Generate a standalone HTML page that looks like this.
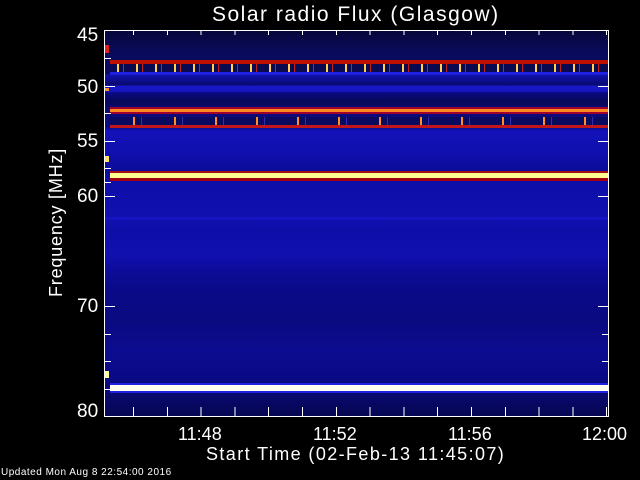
<!DOCTYPE html>
<html><head><style>
body{margin:0;width:640px;height:480px;background:#000;position:relative;overflow:hidden;font-family:"Liberation Sans",sans-serif;color:#fff}
.t{position:absolute;white-space:nowrap;font-weight:normal}
#plot{position:absolute;left:104px;top:30px;width:505px;height:387px;border:1px solid #fff;box-sizing:border-box;overflow:hidden;
background:linear-gradient(to bottom,#06063a 0px,#0a0a5a 20px,#0a0a60 28px,#0a0a60 43px,#1010a8 44px,#0a0a70 54px,#1818c8 55px,#1616c0 60px,#0a0a80 62px,#08085a 70px,#0c0c70 78px,#0a0a88 96px,#1212b8 100px,#1010b0 120px,#0c0c98 140px,#0e0ea8 150px,#1010b0 186px,#1a1ad0 187px,#1010b0 189px,#0e0ea8 200px,#1010b0 225px,#0c0c98 240px,#0a0a88 260px,#0a0a80 290px,#0c0c90 320px,#0a0a88 345px,#08086c 365px,#060650 387px)}
.b{position:absolute;left:5px;right:0}
.k{position:absolute;background:#fff}
</style></head><body>
<div class="t" style="left:212px;top:3px;font-size:21px;letter-spacing:1.5px">Solar radio Flux (Glasgow)</div>
<div id="plot">
<div class="b" style="top:29px;height:4px;background:#c01000"></div>
<div class="b" style="top:33px;height:9px;background:repeating-linear-gradient(to right,#0a0a50 0,#0a0a50 7px,#ffd050 7px,#ffd050 9px,#0a0a50 9px,#0a0a50 13px,#c02020 13px,#c02020 14px,#0a0a50 14px,#0a0a50 19px)"></div>
<div class="b" style="top:41px;height:3px;background:#2020e0"></div>
<div class="b" style="top:76px;height:2px;background:#a00030"></div>
<div class="b" style="top:78px;height:3px;background:#ff8a20"></div>
<div class="b" style="top:81px;height:2px;background:#a00030"></div>
<div class="b" style="top:86px;height:8px;background:repeating-linear-gradient(to right,#0a0a60 0,#0a0a60 23px,#ff9020 23px,#ff9020 25px,#0a0a60 25px,#0a0a60 31px,#3030b0 31px,#3030b0 32px,#0a0a60 32px,#0a0a60 41px)"></div>
<div class="b" style="top:94px;height:3px;background:#c01818"></div>
<div class="b" style="top:140px;height:2px;background:#a01010"></div>
<div class="b" style="top:142px;height:5px;background:#ffff90"></div>
<div class="b" style="top:147px;height:3px;background:#a00010"></div>
<div class="b" style="top:352px;height:2px;background:#2020e0"></div>
<div class="b" style="top:354px;height:6px;background:#fffff0"></div>
<div class="b" style="top:360px;height:2px;background:#2020e0"></div>
<div style="position:absolute;left:0;top:14px;width:4px;height:8px;background:#e02020"></div>
<div style="position:absolute;left:0;top:125px;width:4px;height:6px;background:#ffe060"></div>
<div style="position:absolute;left:0;top:340px;width:4px;height:7px;background:#ffffa0"></div>
<div style="position:absolute;left:0;top:57px;width:4px;height:3px;background:#ff9020"></div>
</div>
<div class="k" style="left:105px;top:58px;width:6px;height:1px"></div>
<div class="k" style="left:105px;top:86px;width:10px;height:1px"></div>
<div class="k" style="left:105px;top:113px;width:6px;height:1px"></div>
<div class="k" style="left:105px;top:141px;width:10px;height:1px"></div>
<div class="k" style="left:105px;top:168px;width:6px;height:1px"></div>
<div class="k" style="left:105px;top:182px;width:6px;height:1px"></div>
<div class="k" style="left:105px;top:196px;width:10px;height:1px"></div>
<div class="k" style="left:105px;top:306px;width:10px;height:1px"></div>
<div class="k" style="left:105px;top:334px;width:6px;height:1px"></div>
<div class="k" style="left:105px;top:361px;width:6px;height:1px"></div>
<div class="k" style="left:105px;top:389px;width:6px;height:1px"></div>
<div class="k" style="left:602px;top:334px;width:6px;height:1px"></div>
<div class="k" style="left:602px;top:361px;width:6px;height:1px"></div>
<div class="k" style="left:598px;top:306px;width:10px;height:1px"></div>
<div class="k" style="left:598px;top:196px;width:10px;height:1px"></div>
<div class="k" style="left:598px;top:141px;width:10px;height:1px"></div>
<div class="k" style="left:598px;top:86px;width:10px;height:1px"></div>
<div style="position:absolute;left:133px;top:407px;width:475px;height:9px;background:repeating-linear-gradient(to right,#fff 0,#fff 1px,transparent 1px,transparent 33.8px)"></div>
<div style="position:absolute;left:133px;top:31px;width:475px;height:4px;background:repeating-linear-gradient(to right,#fff 0,#fff 1px,transparent 1px,transparent 33.8px)"></div>
<div class="t" style="left:77px;top:25px;font-size:19px">45</div>
<div class="t" style="left:77px;top:77px;font-size:19px">50</div>
<div class="t" style="left:77px;top:131px;font-size:19px">55</div>
<div class="t" style="left:77px;top:186px;font-size:19px">60</div>
<div class="t" style="left:77px;top:296px;font-size:19px">70</div>
<div class="t" style="left:77px;top:401px;font-size:19px">80</div>
<div class="t" style="left:46px;top:297px;font-size:18px;letter-spacing:0.8px;transform:rotate(-90deg);transform-origin:0 0">Frequency [MHz]</div>
<div class="t" style="left:178px;top:424px;font-size:18px">11:48</div>
<div class="t" style="left:313px;top:424px;font-size:18px">11:52</div>
<div class="t" style="left:448px;top:424px;font-size:18px">11:56</div>
<div class="t" style="left:582px;top:424px;font-size:18px">12:00</div>
<div class="t" style="left:206px;top:444px;font-size:18px;letter-spacing:1.4px">Start Time (02-Feb-13 11:45:07)</div>
<div class="t" style="left:1px;top:467px;font-size:10px;letter-spacing:0.5px">Updated Mon Aug  8 22:54:00 2016</div>
</body></html>
